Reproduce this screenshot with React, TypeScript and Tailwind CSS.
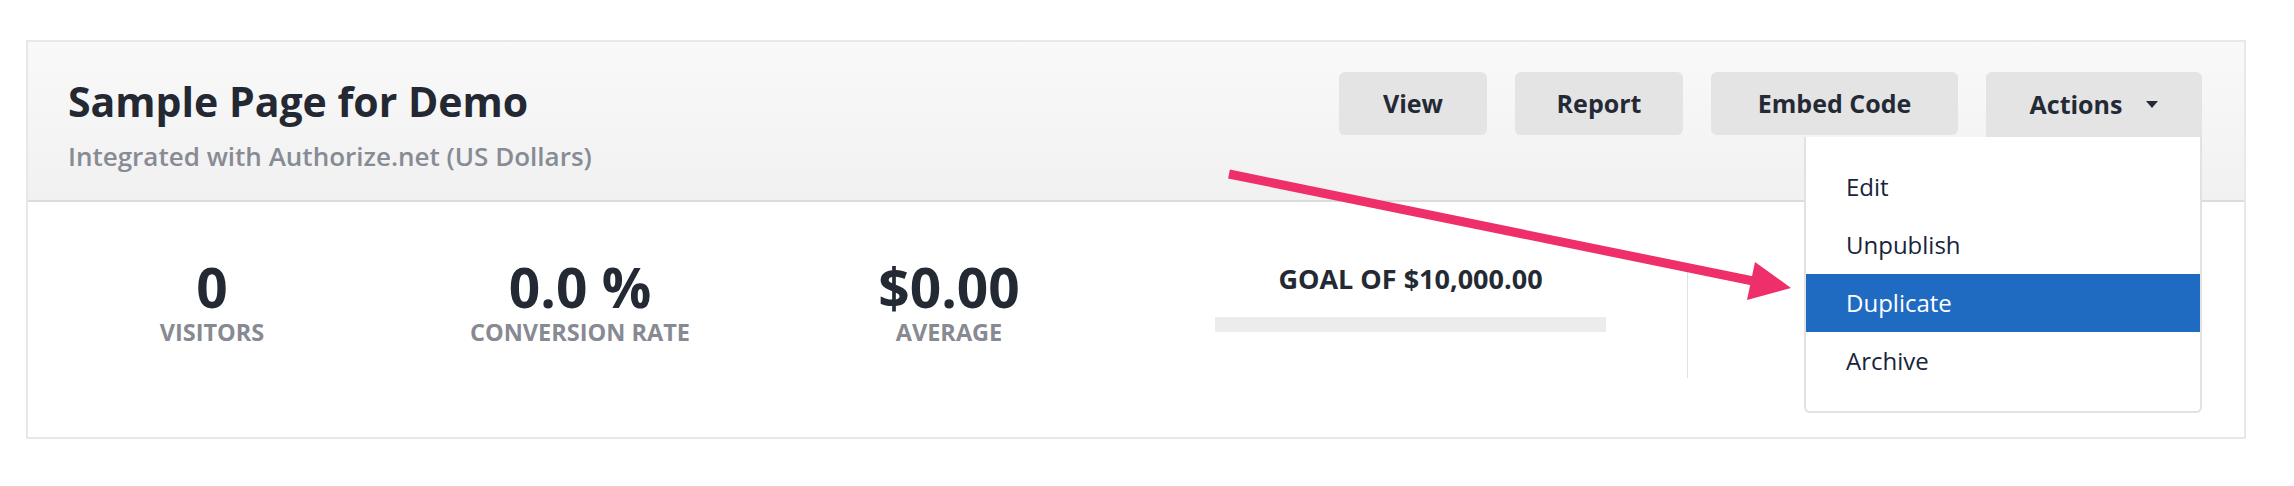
const buttons = [
  { label: 'View', width: 'w-[148px]' },
  { label: 'Report', width: 'w-[168px]' },
  { label: 'Embed Code', width: 'w-[247px]' },
];

const menu = ['Edit', 'Unpublish', 'Duplicate', 'Archive'];

function Stat({ value, label }: { value: string; label: string }) {
  return (
    <div className="flex flex-col items-center pt-[52px]">
      <p className="text-[55px] leading-[66px] font-bold text-[#242a34]">{value}</p>
      <p className="text-[23.5px] leading-[24px] font-bold uppercase text-[#878a92]">{label}</p>
    </div>
  );
}

function Arrow() {
  return (
    <svg className="pointer-events-none absolute left-0 top-0" width="2294" height="486" viewBox="0 0 2294 486">
      <line x1="1229" y1="174" x2="1758" y2="282" stroke="#ee2f6a" strokeWidth="9" />
      <polygon points="1791,288 1755,262 1747,300" fill="#ee2f6a" />
    </svg>
  );
}

export default function App() {
  return (
    <div className="relative h-[486px] w-[2294px] bg-white pl-[26px] pt-[40px] font-['Open_Sans',sans-serif]">
      <div className="h-[399px] w-[2220px] border-2 border-[#e8e8e8] bg-white">
        <header className="flex h-[160px] justify-between border-b-2 border-[#dcdcdc] bg-linear-to-b from-[#f9f9f9] to-[#f1f1f1] pl-[40px] pr-[42px]">
          <div className="pt-[39px]">
            <h1 className="text-[41px] leading-[41px] font-bold text-[#232833]">Sample Page for Demo</h1>
            <p className="mt-[21px] text-[26px] leading-[26px] font-semibold text-[#878b94]">Integrated with Authorize.net (US Dollars)</p>
          </div>
          <div className="flex items-start gap-[28px] pt-[30px]">
            {buttons.map((b) => (
              <button key={b.label} className={`${b.width} h-[63px] rounded-[6px] bg-[#e4e4e4] text-[25px] font-bold text-[#242a35]`}>
                {b.label}
              </button>
            ))}
            <div className="relative">
              <button className="flex h-[65px] w-[216px] items-center justify-center gap-[24px] rounded-t-[6px] bg-[#e4e4e4] text-[25px] font-bold text-[#242a35]">
                Actions
                <svg width="12" height="7" viewBox="0 0 12 7"><polygon points="0,0 12,0 6,7" fill="#242a35" /></svg>
              </button>
              <div className="absolute right-0 top-full z-10 w-[398px] rounded-b-[6px] border-2 border-t-0 border-[#e2e2e2] bg-white py-[21px]">
                {menu.map((m) => (
                  <div
                    key={m}
                    className={`flex h-[58px] items-center pl-[40px] text-[24px] font-medium ${m === 'Duplicate' ? 'bg-[#1f6bc2] text-white' : 'text-[#17243a]'}`}
                  >
                    {m}
                  </div>
                ))}
              </div>
            </div>
          </div>
        </header>
        <div className="grid h-[235px] grid-cols-[368px_368px_370px_553px_1fr]">
          <Stat value="0" label="Visitors" />
          <Stat value="0.0 %" label="Conversion Rate" />
          <Stat value="$0.00" label="Average" />
          <div className="flex flex-col items-center pt-[63px]">
            <p className="text-[27px] leading-[27px] font-bold text-[#242a34]">GOAL OF $10,000.00</p>
            <div className="mt-[25px] h-[15px] w-[391px] bg-[#ececec]" />
          </div>
          <div className="pt-[62px]">
            <div className="h-[114px] w-px bg-[#e2e2e2]" />
          </div>
        </div>
      </div>
      <Arrow />
    </div>
  );
}
